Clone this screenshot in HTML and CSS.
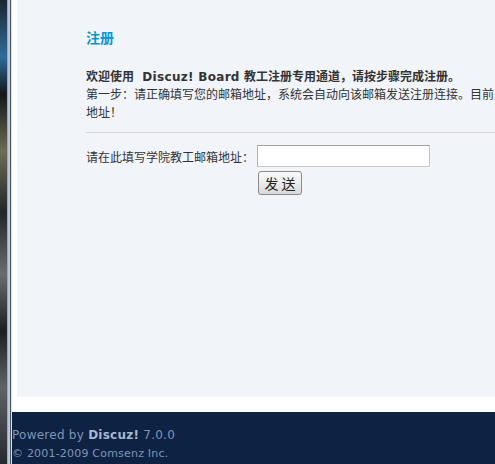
FILE: index.html
```html
<!DOCTYPE html>
<html lang="zh-CN">
<head>
    <meta charset="UTF-8">
    <title>注册 - Discuz! Board</title>
    <link rel="stylesheet" href="styles.css">
</head>
<body>

    <!-- window edge on the left -->
    <div class="edge"></div>

    <div class="page">
        <div class="wrap">
            <div class="panel">
                <h1 class="title">注册</h1>

                <div class="intro">
                    <p class="welcome">欢迎使用 &nbsp;<span class="en">Discuz! Board</span> 教工注册专用通道，请按步骤完成注册。</p>
                    <p>第一步：请正确填写您的邮箱地址，系统会自动向该邮箱发送注册连接。目前只接受本校教工邮箱地址！</p>
                </div>

                <form class="reg-form" onsubmit="return false;">
                    <label for="email">请在此填写学院教工邮箱地址：</label>
                    <input type="text" id="email" class="txt">
                    <button type="submit" class="btn">发 送</button>
                </form>
            </div>
        </div>

        <div class="footer">
            <p class="powered">Powered by <b>Discuz!</b> 7.0.0</p>
            <p class="copy">&copy; 2001-2009 Comsenz Inc.</p>
        </div>
    </div>

</body>
</html>
```

FILE: styles.css
```css
body {
    margin: 0;
    display: flex;
    overflow: hidden;
    font: 12px "DejaVu Sans", "Noto Sans CJK SC", sans-serif;
    color: #333;
    background: #fff;
}

p {
    margin: 0;
}

.edge {
    flex: 0 0 12px;
    min-height: 464px;
    background:
        linear-gradient(to right, transparent 0 7px, #93a9c0 7px 8px, #b7c8d8 8px 10px, #4b5560 10px 11px, #d9e0e8 11px 12px),
        linear-gradient(to bottom, #1c2430, #2f6c9a 12%, #15171b 20%, #6d6b54 32%, #23262b 45%, #6a6c70 58%, #1c1e22 70%, #5f6266 82%, #202327);
}

.page {
    flex: 0 0 620px;
}

.wrap {
    padding-left: 5px;
}

.panel {
    height: 397px;
    box-sizing: border-box;
    padding: 28px 0 0 69px;
    background: #f1f4f9;
}

.title {
    margin: 0 0 20px;
    font-size: 14px;
    line-height: 20px;
    color: #0a96ce;
}

.intro {
    width: 520px;
    line-height: 18px;
    padding-bottom: 10px;
    border-bottom: 1px solid #cbd7e2;
}

.welcome {
    font-weight: bold;
}

.welcome .en {
    letter-spacing: 0.3px;
}

.reg-form {
    display: grid;
    grid-template-columns: auto auto;
    justify-content: start;
    align-items: center;
    column-gap: 3px;
    row-gap: 4px;
    margin-top: 12px;
}

.txt {
    width: 173px;
    height: 22px;
    box-sizing: border-box;
    border: 1px solid #c6c6c6;
    border-top-color: #a2a2a2;
    border-left-color: #b4b4b4;
    background: #fff;
    padding: 0 3px;
}

.btn {
    grid-column: 2;
    justify-self: start;
    margin-left: 1px;
    width: 44px;
    height: 24px;
    padding: 0;
    border: 1px solid #8a8a8a;
    border-radius: 3px;
    background: linear-gradient(#fafafa, #ececec 50%, #d8d8d8);
    font: 14px "Noto Sans CJK SC", sans-serif;
    color: #222;
    cursor: pointer;
}

.footer {
    margin-top: 15px;
    height: 60px;
    padding-top: 14px;
    box-sizing: border-box;
    background: #0e2244;
    color: #7f95b2;
}

.powered {
    line-height: 18px;
    letter-spacing: 0.25px;
}

.powered b {
    color: #a7b9d0;
}

.copy {
    font-size: 11px;
    line-height: 20px;
    letter-spacing: 0.2px;
}
```
